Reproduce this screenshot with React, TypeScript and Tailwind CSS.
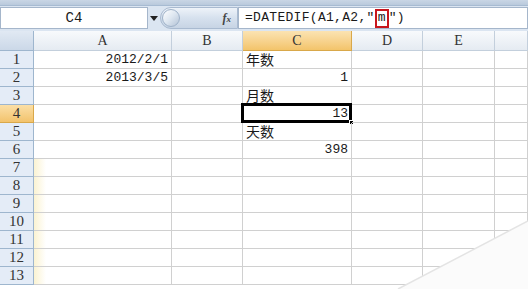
import React from 'react';

const cols = ['A', 'B', 'C', 'D', 'E', ''];

type Cell = { text?: string; align?: 'left' | 'right' };

const data: Record<number, Record<number, Cell>> = {
  1: { 0: { text: '2012/2/1', align: 'right' }, 2: { text: '年数', align: 'left' } },
  2: { 0: { text: '2013/3/5', align: 'right' }, 2: { text: '1', align: 'right' } },
  3: { 2: { text: '月数', align: 'left' } },
  4: { 2: { text: '13', align: 'right' } },
  5: { 2: { text: '天数', align: 'left' } },
  6: { 2: { text: '398', align: 'right' } },
};

const rows = Array.from({ length: 13 }, (_, i) => i + 1);

export default function App() {
  return (
    <div
      className="relative w-[528px] h-[289px] overflow-hidden bg-white text-[#1a1a1a]"
      style={{ fontFamily: '"Liberation Sans", "Noto Sans CJK SC", sans-serif' }}
    >
      {/* ribbon edge */}
      <div className="h-[6px] bg-gradient-to-b from-[#c9d6e5] to-[#b9c9dc] border-b border-[#a7bbd2]" />

      {/* formula bar */}
      <div className="h-[25px] flex items-stretch bg-[#dbe5f1] pt-[1px] pb-[2px]">
        <div className="w-[148px] bg-white border border-[#a5b6cb] flex items-center justify-center text-[14px] font-['Liberation_Mono',monospace]">
          C4
        </div>
        <div className="w-[12px] flex items-center justify-center">
          <span className="block w-0 h-0 border-l-[4px] border-r-[4px] border-t-[5px] border-l-transparent border-r-transparent border-t-[#222]" />
        </div>
        <div className="w-[78px] relative flex items-center justify-end pr-[6px] rounded-l-full bg-gradient-to-b from-[#eef3f9] via-[#d6e1ee] to-[#c7d4e4] border border-[#a9bad0]">
          <span className="absolute left-[1px] top-[1px] w-[18px] h-[18px] rounded-full bg-gradient-to-br from-white via-[#dde6f0] to-[#b4c3d6] border border-[#9fb2c9]" />
          <span className="italic font-bold text-[12px] text-[#444] font-['Liberation_Serif',serif]">
            f<span className="text-[9px]">x</span>
          </span>
        </div>
        <div className="flex-1 bg-white border border-[#a5b6cb] flex items-center pl-[6px] text-[13px] font-['Liberation_Mono',monospace] tracking-[0.3px]">
          <span>=DATEDIF(A1,A2,"</span>
          <span className="inline-flex items-center h-[19px] px-[1px] border-[2px] border-[#c8161d]">m</span>
          <span>")</span>
        </div>
      </div>

      {/* grid */}
      <div className="grid grid-cols-[34px_138px_71px_109px_71px_72px_1fr] text-[14px]">
        <div className="h-[20px] border-r border-b border-[#9eb6ce] bg-gradient-to-b from-[#e1e9f3] to-[#cbd8e8]" />
        {cols.map((c, i) => (
          <div
            key={c + i}
            className={`h-[20px] border-r border-b flex items-center justify-center font-['Liberation_Serif',serif] text-[14px] text-[#333] ${
              i === 2
                ? 'bg-gradient-to-b from-[#fbe3b2] to-[#f3c46a] border-[#d9a84a]'
                : 'bg-gradient-to-b from-[#f8fafc] to-[#e5ebf2] border-[#c3cfdc]'
            }`}
          >
            {c}
          </div>
        ))}

        {rows.map((r) => (
          <React.Fragment key={r}>
            <div
              className={`h-[18px] border-r border-b flex items-center justify-center font-['Liberation_Serif',serif] text-[15px] text-[#333] ${
                r === 4
                  ? 'bg-gradient-to-b from-[#fbdfa6] to-[#f3c36c] border-[#d9a84a]'
                  : 'bg-[#e4ecf7] border-[#9eb6ce]'
              }`}
            >
              {r}
            </div>
            {cols.map((c, i) => {
              const cell = data[r]?.[i];
              const isSel = r === 4 && i === 2;
              const glow = i === 0 && r >= 7;
              return (
                <div
                  key={c + i}
                  className={`relative h-[18px] border-r border-b border-[#d0d0d0] flex items-end px-[3px] leading-[16px] ${
                    cell?.align === 'right' ? 'justify-end' : 'justify-start'
                  } ${glow ? 'bg-[linear-gradient(to_right,#fbf3d2,#ffffff_12px)]' : ''} ${
                    cell?.align === 'right' ? "font-['Liberation_Mono',monospace] text-[13px]" : ''
                  }`}
                >
                  {cell?.text}
                  {isSel && (
                    <>
                      <span className="absolute -left-[2px] -top-[2px] -right-[1px] -bottom-[1px] border-[3px] border-black" />
                      <span className="absolute -right-[3px] -bottom-[3px] w-[5px] h-[5px] bg-black border border-white" />
                    </>
                  )}
                </div>
              );
            })}
          </React.Fragment>
        ))}
      </div>

      {/* page curl */}
      <svg className="absolute left-0 top-0" width="528" height="289" viewBox="0 0 528 289">
        <polygon points="528,221 398,289 528,289" fill="#fbfbfb" />
        <line x1="528" y1="221" x2="398" y2="289" stroke="#e4e4e4" strokeWidth="1.5" />
      </svg>
    </div>
  );
}
